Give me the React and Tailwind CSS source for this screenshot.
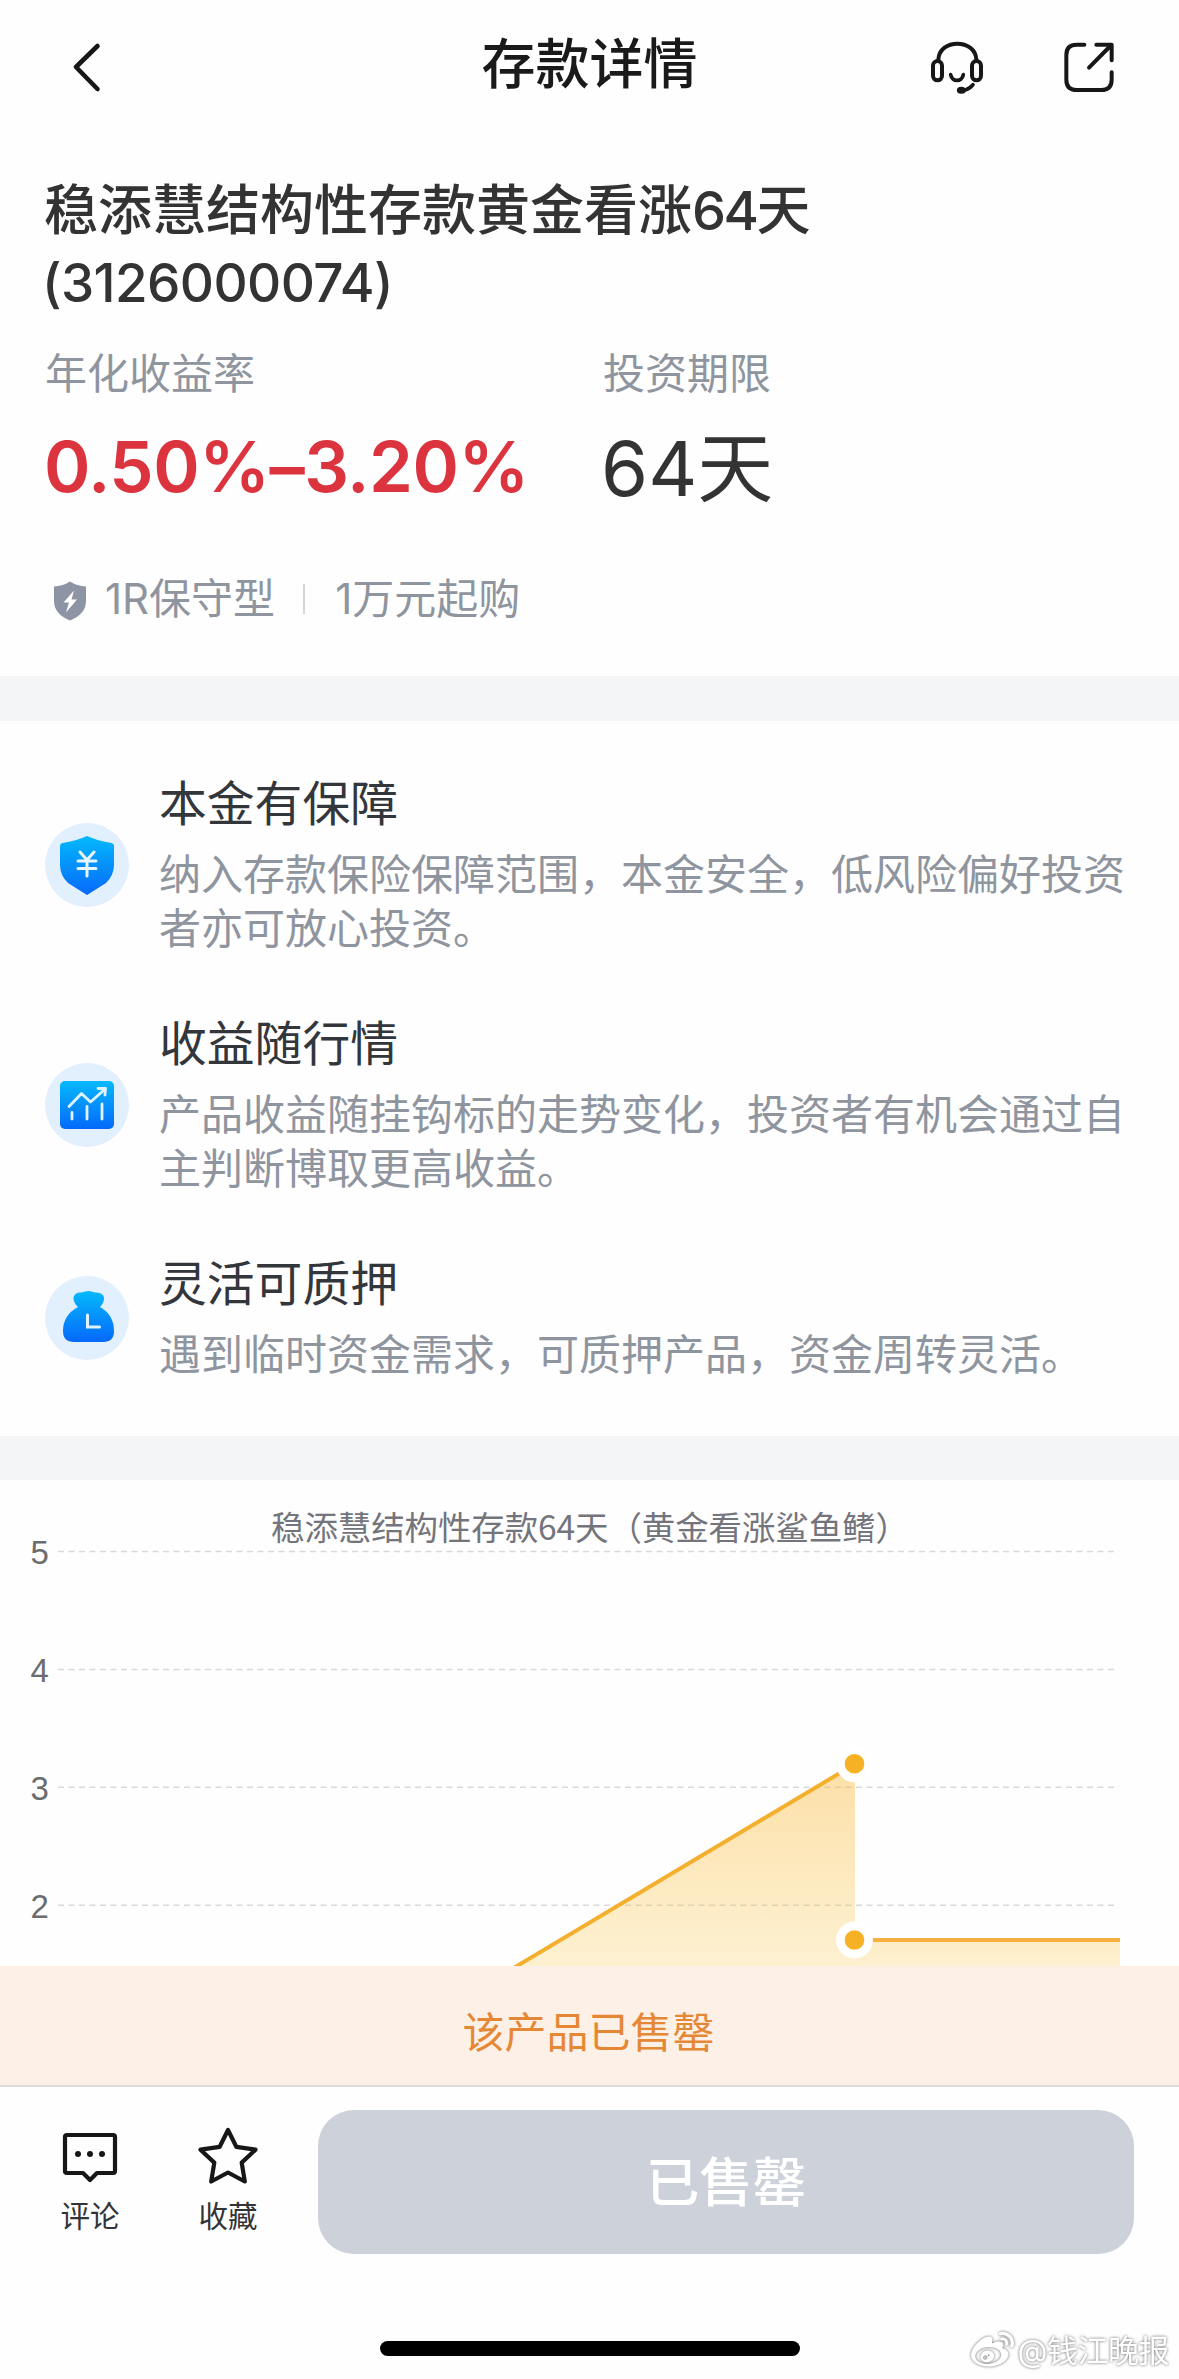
import React from "react";
import { FaWeibo } from "react-icons/fa";

function BackIcon() {
  return (
    <svg width="36" height="52" viewBox="0 0 36 52" fill="none" stroke="#171717" strokeWidth="4.6" strokeLinecap="round" strokeLinejoin="round">
      <path d="M30.500 5 L9 26 L30.500 48" />
    </svg>
  );
}

function HeadsetIcon() {
  return (
    <svg width="56" height="56" viewBox="87 54 168 168" fill="none" stroke="#171717" strokeWidth="12" strokeLinecap="round">
      <path d="M115 116 C118 52 226 52 229 116" />
      <rect x="99" y="120" width="27" height="58" rx="13.500" />
      <rect x="216" y="120" width="27" height="58" rx="13.500" />
      <path d="M152 161 C156 184 186 184 190 161" strokeWidth="11" />
      <path d="M219 191 Q210 203 196 207" strokeWidth="11" />
      <ellipse cx="184" cy="208" rx="9" ry="6" fill="#171717" strokeWidth="9" />
    </svg>
  );
}

function ShareIcon() {
  return (
    <svg width="56" height="56" viewBox="483 56 168 168" fill="none" stroke="#171717" strokeWidth="12" strokeLinecap="round" strokeLinejoin="round">
      <path d="M553 73 H530 Q499 73 499 104 V178 Q499 209 530 209 H604 Q635 209 635 178 V156" />
      <path d="M589 73 H635 V120" />
      <path d="M567 142 L631 77" />
    </svg>
  );
}

function RiskShield() {
  return (
    <svg width="34" height="40" viewBox="0 0 34 40">
      <path d="M17 0.500 Q24 5 33 5.500 V20 Q33 33 17 39.500 Q1 33 1 20 V5.500 Q10 5 17 0.500 Z" fill="#8d95a5" />
      <path d="M21 9.500 L10.500 21.500 H16 L13 31.500 L24 18.500 H18.500 Z" fill="#fff" />
    </svg>
  );
}

function IconDisc({ id, children }) {
  return (
    <svg width="84" height="84" viewBox="0 0 84 84" className="shrink-0">
      <defs>
        <linearGradient id={id} x1="0" y1="0" x2="0" y2="1">
          <stop offset="0" stopColor="#04b9fb" />
          <stop offset="1" stopColor="#0569fb" />
        </linearGradient>
      </defs>
      <circle cx="42" cy="42" r="42" fill="#e2effc" />
      {children}
    </svg>
  );
}

function ShieldArt() {
  return (
    <IconDisc id="g-shield">
      <path d="M42 13 Q53 18 66.500 20 Q69 20.500 69 23 V42 Q69 52 61 60 L42 72 L23 60 Q15 52 15 42 V23 Q15 20.500 17.500 20 Q31 18 42 13 Z" fill="url(#g-shield)" />
      <path d="M35 29 L42 37 L49 29 M42 37 V53 M33 38 H51 M33 45.500 H51" stroke="#e8f6ff" strokeWidth="3" strokeLinecap="round" fill="none" />
    </IconDisc>
  );
}

function TrendArt() {
  return (
    <IconDisc id="g-trend">
      <rect x="15" y="18" width="54" height="48" rx="5" fill="url(#g-trend)" />
      <path d="M24 43.500 L36.500 30.500 L45.500 39 L59 27 M53 25.500 H60.500 L60 32 M27 49.500 V56 M42 43.500 V56 M57 41 V56" stroke="#dff3ff" strokeWidth="2.800" strokeLinecap="round" strokeLinejoin="round" fill="none" />
    </IconDisc>
  );
}

function BagArt() {
  return (
    <IconDisc id="g-bag">
      <path d="M33 31 Q28 26 28.500 21.500 Q30 16 36.500 16.500 Q43.500 13.500 50 16.500 Q58 16.500 59 21.500 Q59.500 26 55 31 Q69 39 69 55 Q69 66 58 66 H29 Q18 66 18 55 Q18 39 33 31 Z" fill="url(#g-bag)" />
      <path d="M42.500 39 V51 H54.500" stroke="#dff3ff" strokeWidth="3" strokeLinecap="round" fill="none" />
    </IconDisc>
  );
}

const features = [
  { art: ShieldArt, title: "本金有保障", lines: ["纳入存款保险保障范围，本金安全，低风险偏好投资", "者亦可放心投资。"] },
  { art: TrendArt, title: "收益随行情", lines: ["产品收益随挂钩标的走势变化，投资者有机会通过自", "主判断博取更高收益。"] },
  { art: BagArt, title: "灵活可质押", lines: ["遇到临时资金需求，可质押产品，资金周转灵活。"] },
];

const ticks = [
  { label: "5", y: 71.5 },
  { label: "4", y: 189.5 },
  { label: "3", y: 307.3 },
  { label: "2", y: 425.2 },
];

function PayoffChart() {
  return (
    <svg width="1179" height="486" viewBox="0 0 1179 486" className="block">
      <defs>
        <linearGradient id="area" gradientUnits="userSpaceOnUse" x1="0" y1="284" x2="0" y2="486">
          <stop offset="0" stopColor="#f9b32d" stopOpacity="0.42" />
          <stop offset="1" stopColor="#fbc84a" stopOpacity="0.25" />
        </linearGradient>
        <linearGradient id="area-flat" gradientUnits="userSpaceOnUse" x1="0" y1="460" x2="0" y2="486">
          <stop offset="0" stopColor="#fbc03f" stopOpacity="0.3" />
          <stop offset="1" stopColor="#fbc84a" stopOpacity="0.25" />
        </linearGradient>
      </defs>
      {ticks.map((t) => (
        <g key={t.label}>
          <line x1="58" x2="1117" y1={t.y} y2={t.y} stroke="#d9d9db" strokeWidth="1.6" strokeDasharray="6 4.500" />
          <text x="30.500" y={t.y + 12.5} fontSize="33" fill="#6b6c70" fontFamily="'Liberation Sans', Arial, sans-serif">{t.label}</text>
        </g>
      ))}
      <path d="M514 488 L855 284 V488 Z" fill="url(#area)" />
      <path d="M855 460 H1120 V486 H855 Z" fill="url(#area-flat)" />
      <path d="M512 489 L855 284" stroke="#f3b02f" strokeWidth="4" />
      <path d="M855 460 H1120" stroke="#f3b040" strokeWidth="4" />
      <circle cx="854.500" cy="284" r="18.500" fill="#fff" />
      <circle cx="854.500" cy="460" r="18.500" fill="#fff" />
      <circle cx="854.500" cy="283.700" r="9.800" fill="#f6b125" />
      <circle cx="854.500" cy="460" r="9.800" fill="#f6b125" />
      <text x="271" y="60" fontSize="33.500" fill="#74757c" fontFamily="'Noto Sans CJK SC', sans-serif" textLength="638" lengthAdjust="spacing">稳添慧结构性存款64天（黄金看涨鲨鱼鳍）</text>
    </svg>
  );
}

function CommentIcon() {
  return (
    <svg width="60" height="62" viewBox="60 2124 60 62" fill="none" stroke="#171717" strokeWidth="4.200" strokeLinejoin="round">
      <path d="M67 2135 H113 Q115 2135 115 2137 V2171 Q115 2173 113 2173 H97 L90 2180 L83 2173 H67 Q65 2173 65 2171 V2137 Q65 2135 67 2135 Z" />
      <g fill="#171717" stroke="none">
        <circle cx="78" cy="2154" r="3" />
        <circle cx="90" cy="2154" r="3" />
        <circle cx="102" cy="2154" r="3" />
      </g>
    </svg>
  );
}

function StarIcon() {
  return (
    <svg width="64" height="62" viewBox="196 2124 64 62" fill="none" stroke="#171717" strokeWidth="4.200" strokeLinejoin="round">
      <path d="M228 2130 L236.300 2146.800 L255.500 2149.700 L241.700 2162.600 L244.800 2181.500 L228 2172.500 L211.200 2181.500 L214.300 2162.600 L200.500 2149.700 L219.700 2146.800 Z" />
    </svg>
  );
}

function TabItem({ icon, label }) {
  return (
    <div className="flex w-16 flex-col items-center">
      {icon}
      <span className="mt-[13px] text-[29.5px] leading-[34px] text-[#333437]">{label}</span>
    </div>
  );
}

export default function App() {
  return (
    <div className="relative flex h-[2379px] w-[1179px] flex-col overflow-hidden bg-[#fefefe] font-['Inter','Noto_Sans_CJK_SC',sans-serif]">
      <header className="grid h-[134px] shrink-0 grid-cols-[1fr_auto_1fr] items-center pb-1 pr-[62px] pl-[67px]">
        <div className="pt-1"><BackIcon /></div>
        <h1 className="-ml-[5px] text-[54px] leading-[72px] font-medium text-[#1a1a1a]">存款详情</h1>
        <div className="flex justify-end gap-[76px] pt-1">
          <HeadsetIcon />
          <ShareIcon />
        </div>
      </header>

      <section className="h-[542px] shrink-0 px-[45px] pt-[41px]">
        <h2 className="-ml-px text-[54px] leading-[72px] font-medium text-[#333]">
          稳添慧结构性存款黄金看涨<span className="tracking-[-2.5px]">64</span>天
          <br />
          <span className="-ml-0.5 text-[53px] tracking-[-0.6px]">(3126000074)</span>
        </h2>
        <div className="mt-[31px] flex">
          <div className="w-[558px]">
            <p className="text-[42px] leading-[48px] text-[#8f959f]">年化收益率</p>
            <p className="-ml-px mt-[29px] text-[70.5px] leading-[80px] font-semibold tracking-[-0.5px] text-[#dc343f]">0.50%–3.20%</p>
          </div>
          <div>
            <p className="text-[42px] leading-[48px] text-[#8f959f]">投资期限</p>
            <p className="-ml-0.5 mt-[29px] text-[76px] leading-[82px] text-[#333]">64天</p>
          </div>
        </div>
        <div className="mt-[66px] flex items-center text-[42px] leading-[48px] text-[#8f959f]">
          <div className="mr-[18px] ml-2 pt-1"><RiskShield /></div>
          <span>1R保守型</span>
          <span className="mr-[30px] ml-[28px] h-[30px] w-[2px] bg-[#d3d5da]" />
          <span>1万元起购</span>
        </div>
      </section>

      <div className="h-[45px] shrink-0 bg-[#f4f5f7]" />

      <section className="flex h-[715px] shrink-0 flex-col gap-[60px] pt-[54px] pl-[45px]">
        {features.map(({ art: Art, title, lines }) => (
          <article key={title} className="flex items-center gap-[30px]">
            <Art />
            <div className="relative top-px">
              <h3 className="text-[47.8px] leading-[56px] text-[#33363b]">{title}</h3>
              <div className="mt-4 text-[42px] leading-[54px] whitespace-nowrap text-[#8f959f]">
                {lines.map((line) => <p key={line}>{line}</p>)}
              </div>
            </div>
          </article>
        ))}
      </section>

      <div className="h-[44px] shrink-0 bg-[#f4f5f6]" />

      <section className="h-[486px] shrink-0"><PayoffChart /></section>

      <div className="flex h-[121px] shrink-0 items-center justify-center border-b-2 border-[#dcdcdc] bg-[#fdf0e7] pt-3.5 pr-0.5 text-[42px] leading-[48px] text-[#e58836]">
        该产品已售罄
      </div>

      <footer className="flex h-[292px] shrink-0 flex-col items-center justify-between pb-[23px]">
        <div className="flex w-full pt-[23px] pr-[45px] pl-[58px]">
          <div className="flex gap-[74px] pt-3.5">
            <TabItem icon={<CommentIcon />} label="评论" />
            <TabItem icon={<StarIcon />} label="收藏" />
          </div>
          <button className="ml-[58px] h-[144px] flex-1 rounded-[36px] bg-[#cdd2da] pt-0.5 text-[53.5px] leading-[72px] font-medium text-white">已售罄</button>
        </div>
        <div className="h-[15px] w-[420px] rounded-full bg-black" />
      </footer>

      <div className="absolute right-[10px] bottom-[7px] flex items-center gap-1 text-[31px] leading-[42px] text-white [filter:drop-shadow(0_0_1.5px_rgba(0,0,0,0.6))]">
        <FaWeibo size={43} />
        <span className="tracking-[-0.5px]">@钱江晚报</span>
      </div>
    </div>
  );
}
